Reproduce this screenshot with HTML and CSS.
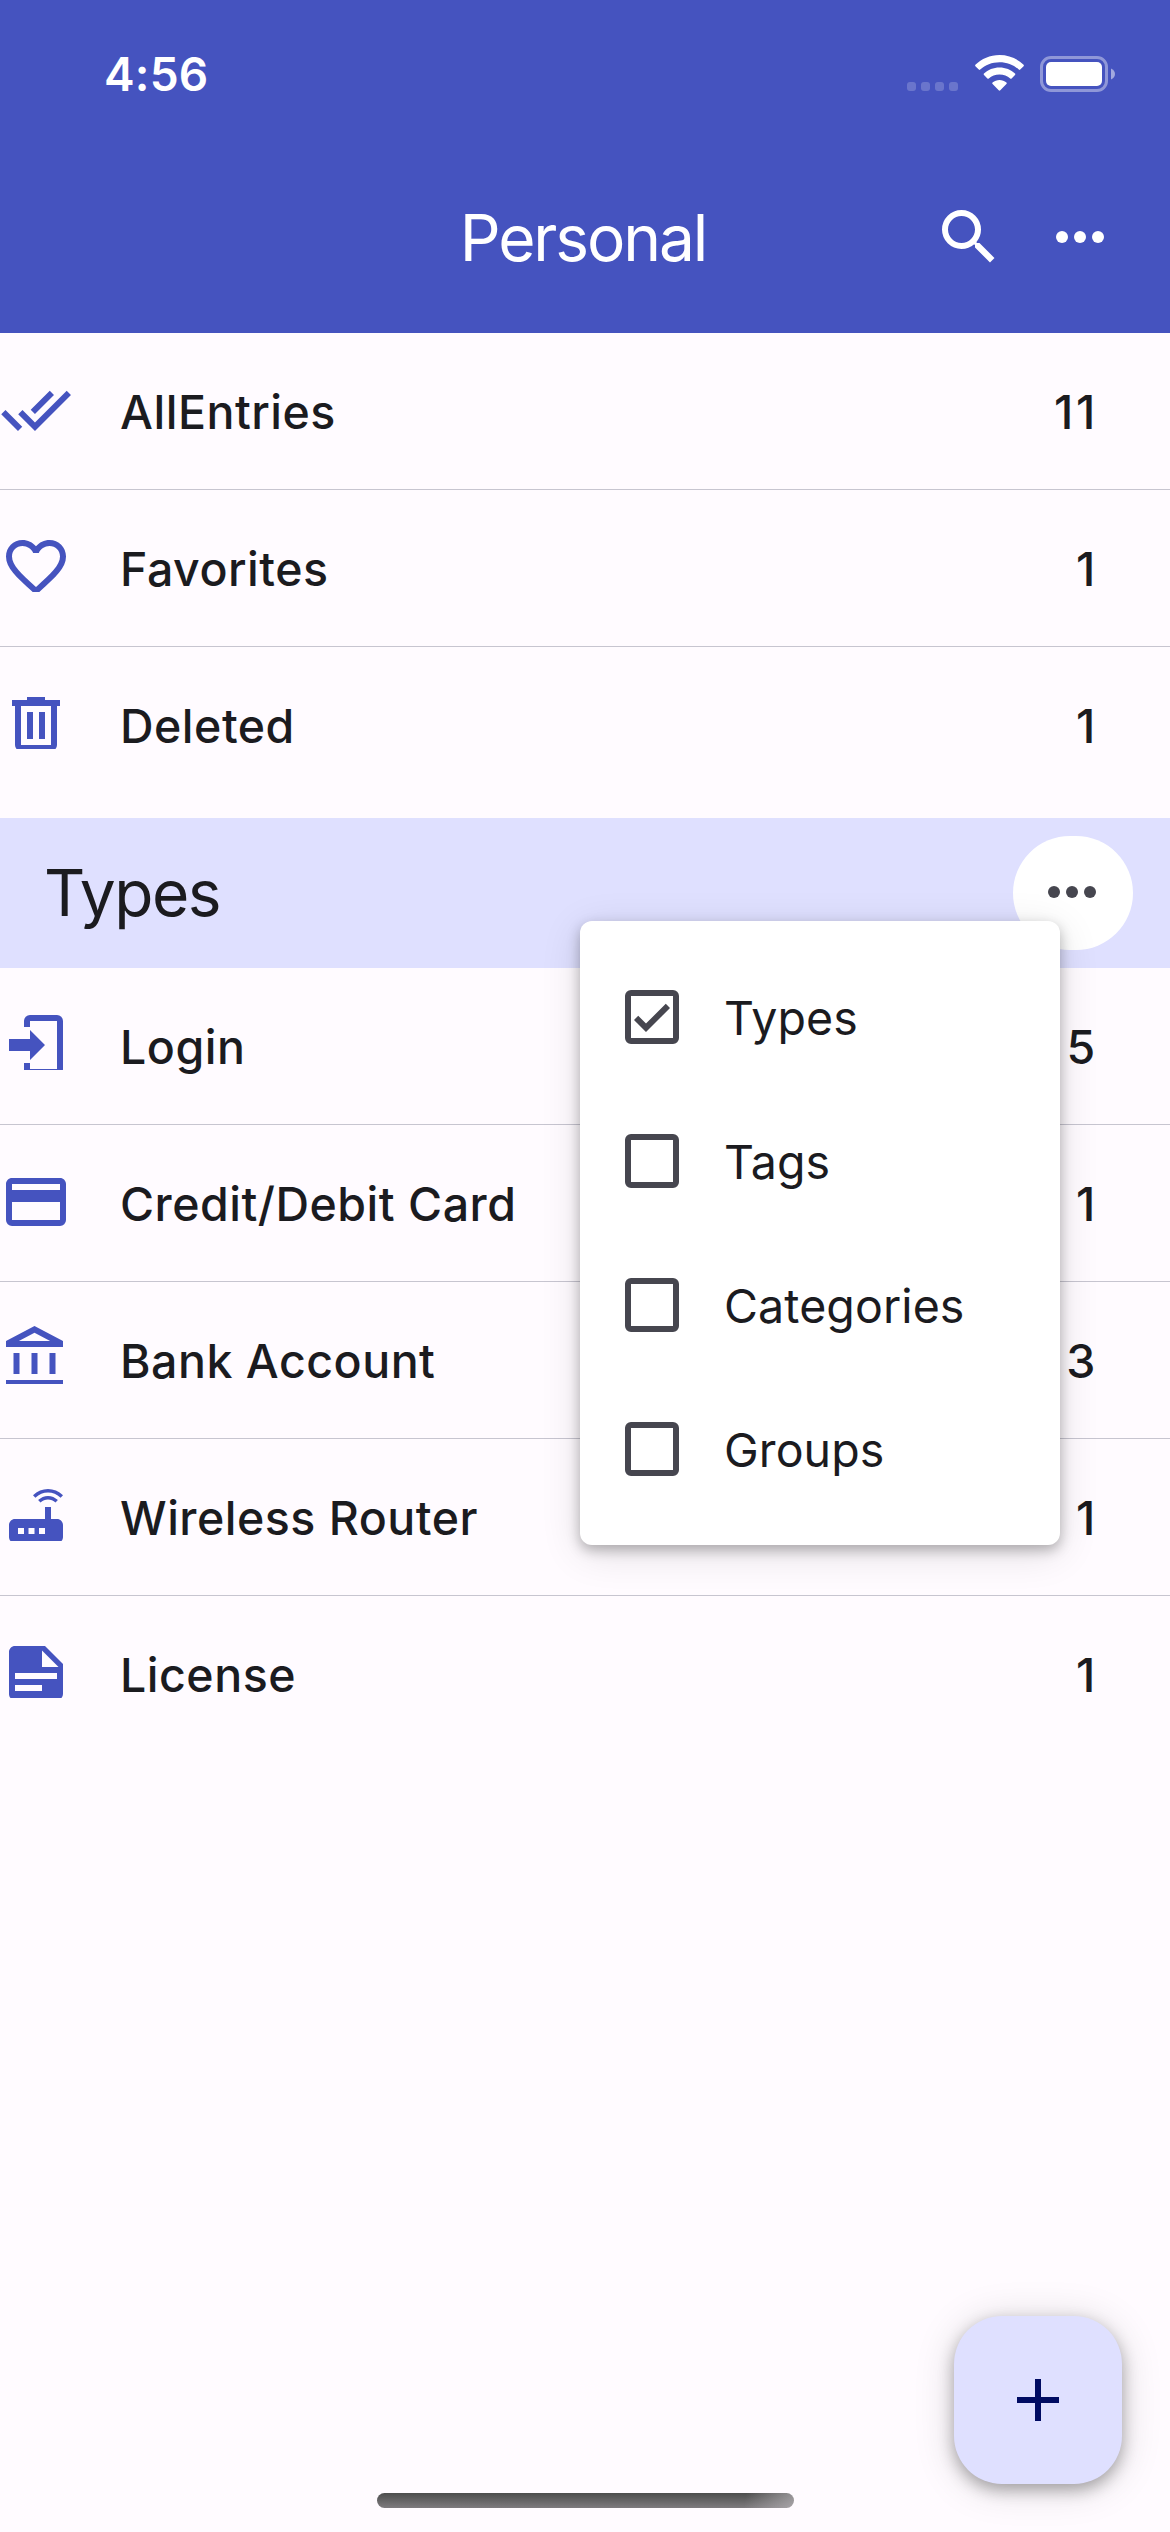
FILE: index.html
```
<!DOCTYPE html>
<html lang="en">
<head>
<meta charset="utf-8">
<title>Personal</title>
<link rel="stylesheet" href="styles.css">
</head>
<body>
<div class="screen">
  <header class="app-header">
    <div class="status-bar">
      <span class="time">4:56</span>
      <div class="status-icons">
        <svg class="signal" viewBox="0 0 51 9"><rect width="9" height="9" rx="3"/><rect x="14" width="9" height="9" rx="3"/><rect x="28" width="9" height="9" rx="3"/><rect x="42" width="9" height="9" rx="3"/></svg>
        <svg class="wifi" viewBox="0 0 49 36"><path d="M24.500 0C34 0 42.500 3.800 48.600 9.800Q49.200 10.500 48.600 11.200L45.200 14.600Q44.500 15.200 43.800 14.600C38.800 9.900 32 7.200 24.500 7.200S10.200 9.900 5.200 14.600Q4.500 15.200 3.800 14.600L.4 11.200Q-.2 10.500.4 9.800C6.500 3.800 15 0 24.500 0ZM24.500 12.500C30.500 12.500 36 14.800 40 18.600Q40.700 19.300 40 20L36.600 23.400Q35.900 24.100 35.200 23.400C32.400 20.900 28.700 19.400 24.500 19.400S16.600 20.900 13.800 23.400Q13.100 24.100 12.400 23.400L9 20Q8.300 19.300 9 18.600C13 14.800 18.500 12.500 24.500 12.500ZM24.500 24.900C27.100 24.900 29.500 25.800 31.400 27.400Q32.100 28.100 31.400 28.900L25.300 35.300Q24.500 36 23.700 35.300L17.600 28.900Q16.900 28.100 17.600 27.400C19.500 25.800 21.900 24.900 24.500 24.900Z"/></svg>
        <svg class="battery" viewBox="0 0 75 36"><rect x="1.500" y="1.500" width="65" height="33" rx="9.500" fill="none" stroke="currentColor" stroke-width="3" opacity=".4"/><rect x="6" y="6" width="56" height="24" rx="5"/><path d="M71 12.500C73.500 13.700 75 15.600 75 18S73.500 22.300 71 23.500Z" opacity=".5"/></svg>
      </div>
    </div>
    <div class="toolbar">
      <h1 class="title">Personal</h1>
      <div class="actions">
        <svg class="icon" viewBox="0 0 24 24"><path d="M15.500 14h-.79l-.28-.27A6.470 6.470 0 0 0 16 9.500 6.500 6.500 0 1 0 9.500 16c1.610 0 3.090-.59 4.230-1.570l.27.28v.79l5 4.990L20.490 19l-4.990-5zm-6 0C7.010 14 5 11.990 5 9.500S7.010 5 9.500 5 14 7.010 14 9.500 11.990 14 9.500 14z"/></svg>
        <svg class="icon" viewBox="0 0 24 24"><circle cx="6" cy="12" r="2"/><circle cx="12" cy="12" r="2"/><circle cx="18" cy="12" r="2"/></svg>
      </div>
    </div>
  </header>

  <ul class="list summary">
    <li class="row"><svg class="row-icon" viewBox="0 0 24 20.333"><path d="M.41 13.410 6 19l1.410-1.420L1.830 12M22.240 5.580 11.660 16.170 7.500 12l-1.430 1.410L11.660 19l12-12M18 7l-1.410-1.420-6.350 6.350 1.420 1.410L18 7Z"/></svg><span class="label">AllEntries</span><span class="count">11</span></li>
    <li class="row"><svg class="row-icon" viewBox="0 0 24 20.333"><path d="M12.100 18.550l-.1.100-.11-.1C7.140 14.240 4 11.390 4 8.500 4 6.500 5.500 5 7.500 5c1.540 0 3.040 1 3.570 2.360h1.860C13.460 6 14.960 5 16.500 5c2 0 3.500 1.500 3.500 3.500 0 2.890-3.140 5.740-7.900 10.050M16.500 3c-1.740 0-3.410.81-4.500 2.080C10.910 3.810 9.240 3 7.500 3 4.420 3 2 5.410 2 8.500c0 3.770 3.400 6.860 8.550 11.530L12 21.350l1.450-1.320C18.600 15.360 22 12.270 22 8.500 22 5.410 19.580 3 16.500 3Z"/></svg><span class="label">Favorites</span><span class="count">1</span></li>
    <li class="row"><svg class="row-icon" viewBox="0 0 24 20.333"><path d="M9 3v1H4v2h1v13a2 2 0 0 0 2 2h10a2 2 0 0 0 2-2V6h1V4h-5V3H9M7 6h10v13H7V6M9 8v9h2V8H9M13 8v9h2V8h-2Z"/></svg><span class="label">Deleted</span><span class="count">1</span></li>
  </ul>

  <div class="section-head">
    <h2 class="section-title">Types</h2>
    <div class="more"><svg class="icon" viewBox="0 0 24 24"><circle cx="6" cy="12" r="2"/><circle cx="12" cy="12" r="2"/><circle cx="18" cy="12" r="2"/></svg></div>
    <div class="menu">
      <div class="menu-item"><svg class="icon" viewBox="0 0 24 24"><path d="M19 3H5a2 2 0 0 0-2 2v14a2 2 0 0 0 2 2h14a2 2 0 0 0 2-2V5a2 2 0 0 0-2-2m0 2v14H5V5h14M10 17l-4-4 1.410-1.420L10 14.170l6.590-6.590L18 9"/></svg><span>Types</span></div>
      <div class="menu-item"><svg class="icon" viewBox="0 0 24 24"><path d="M19 3H5a2 2 0 0 0-2 2v14a2 2 0 0 0 2 2h14a2 2 0 0 0 2-2V5a2 2 0 0 0-2-2m0 2v14H5V5h14Z"/></svg><span>Tags</span></div>
      <div class="menu-item"><svg class="icon" viewBox="0 0 24 24"><path d="M19 3H5a2 2 0 0 0-2 2v14a2 2 0 0 0 2 2h14a2 2 0 0 0 2-2V5a2 2 0 0 0-2-2m0 2v14H5V5h14Z"/></svg><span>Categories</span></div>
      <div class="menu-item"><svg class="icon" viewBox="0 0 24 24"><path d="M19 3H5a2 2 0 0 0-2 2v14a2 2 0 0 0 2 2h14a2 2 0 0 0 2-2V5a2 2 0 0 0-2-2m0 2v14H5V5h14Z"/></svg><span>Groups</span></div>
    </div>
  </div>

  <ul class="list">
    <li class="row"><svg class="row-icon" viewBox="0 0 24 20.333"><path d="M10 17v-3H3v-4h7V7l5 5-5 5M10 2h9a2 2 0 0 1 2 2v16a2 2 0 0 1-2 2h-9a2 2 0 0 1-2-2v-2h2v2h9V4h-9v2H8V4a2 2 0 0 1 2-2Z"/></svg><span class="label">Login</span><span class="count">5</span></li>
    <li class="row"><svg class="row-icon" viewBox="0 0 24 20.333"><path d="M20 8H4V6h16m0 12H4v-6h16m0-8H4c-1.110 0-2 .89-2 2v12a2 2 0 0 0 2 2h16a2 2 0 0 0 2-2V6c0-1.110-.89-2-2-2Z"/></svg><span class="label">Credit/Debit Card</span><span class="count">1</span></li>
    <li class="row"><svg class="row-icon" viewBox="0 0 24 20.333"><path d="M6.500 10h-2v7h2v-7zM12.500 10h-2v7h2v-7zM21 19H2v2h19v-2zM18.500 10h-2v7h2v-7zM11.500 3.260 16.710 6H6.290l5.210-2.740M11.500 1 2 6v2h19V6l-9.500-5z"/></svg><span class="label">Bank Account</span><span class="count">3</span></li>
    <li class="row"><svg class="row-icon" viewBox="0 0 24 20.333"><path d="M20.200 5.900l.8-.8C19.600 3.700 17.800 3 16 3s-3.600.7-5 2.100l.8.800C13 4.800 14.500 4.200 16 4.200s3 .6 4.200 1.700zm-.9.800c-.9-.9-2.100-1.400-3.300-1.400s-2.400.5-3.300 1.400l.8.800c.7-.7 1.600-1 2.500-1s1.800.3 2.500 1l.8-.8zM19 13h-2V9h-2v4H5c-1.100 0-2 .9-2 2v4c0 1.100.9 2 2 2h14c1.100 0 2-.9 2-2v-4c0-1.100-.9-2-2-2zM8 18H6v-2h2v2zm3.500 0h-2v-2h2v2zm3.500 0h-2v-2h2v2z"/></svg><span class="label">Wireless Router</span><span class="count">1</span></li>
    <li class="row"><svg class="row-icon" viewBox="0 0 24 20.333"><path d="M14 10h5.500L14 4.500V10M5 3h10l6 6v10a2 2 0 0 1-2 2H5c-1.110 0-2-.9-2-2V5c0-1.110.89-2 2-2M5 12v2h14v-2H5M5 16v2h9v-2H5Z"/></svg><span class="label">License</span><span class="count">1</span></li>
  </ul>

  <div class="fab"><svg class="icon" viewBox="0 0 24 24"><path d="M19 13h-6v6h-2v-6H5v-2h6V5h2v6h6v2Z"/></svg></div>
  <div class="home-indicator"></div>
</div>
</body>
</html>
```
FILE: styles.css
```
* { box-sizing: border-box; margin: 0; padding: 0; }

body {
  font-family: Inter, "Liberation Sans", sans-serif;
  background: #fffbff;
  color: #1b1b1f;
}

svg { display: block; fill: currentColor; flex: none; }

.screen {
  position: relative;
  width: 1170px;
  height: 2532px;
  overflow: hidden;
}

.icon { width: 72px; height: 72px; }

.app-header { height: 333px; background: #4553bf; color: #fff; }

.status-bar {
  display: flex;
  justify-content: space-between;
  height: 141px;
  padding: 55px 55px 0 104px;
}
.time { font-size: 46px; font-weight: 600; line-height: 39px; letter-spacing: .2px; }
.status-icons { display: flex; align-items: flex-start; }
.signal { width: 51px; height: 9px; margin: 27px 17px 0 0; opacity: .2; }
.wifi { width: 49px; height: 36px; margin-right: 16px; }
.battery { width: 75px; height: 36px; margin-top: 1px; }

.toolbar {
  display: grid;
  grid-template-columns: 1fr auto 1fr;
  align-items: center;
  height: 192px;
  padding: 0 54px;
}
.title {
  grid-column: 2;
  padding: 2px 4px 0 0;
  font-size: 64px;
  font-weight: 400;
  line-height: 84px;
  letter-spacing: -2.1px;
}
.actions { display: flex; justify-content: flex-end; gap: 39px; }

.list { list-style: none; }
.row {
  display: flex;
  align-items: flex-start;
  height: 157px;
  padding: 41px 75px 0 0;
  border-bottom: 1px solid #c7c5d0;
  font-size: 46.5px;
  font-weight: 500;
  line-height: 72px;
}
.row:last-child { border-bottom: 0; }
.row-icon { width: 72px; height: 61px; color: #4553bf; }
.label { flex: 1; margin-left: 48px; padding-top: 2px; letter-spacing: .5px; }
.count { margin-right: -3px; padding-top: 2px; letter-spacing: 2.7px; }
.summary { height: 485px; }

.section-head {
  position: relative;
  display: flex;
  align-items: center;
  justify-content: space-between;
  height: 150px;
  padding: 0 37px 0 44px;
  background: #dfe0ff;
}
.section-title { font-size: 64px; font-weight: 400; line-height: 84px; letter-spacing: -1.5px; }
.more {
  display: flex;
  align-items: center;
  justify-content: center;
  width: 120px;
  height: 114px;
  padding: 0 2px 2px 0;
  border-radius: 57px;
  background: #fff;
  color: #46464f;
}

.menu {
  position: absolute;
  z-index: 2;
  top: 103px;
  left: 580px;
  width: 480px;
  padding: 24px 36px;
  border-radius: 12px;
  background: #fff;
  box-shadow: 0 5px 13px rgba(0, 0, 0, .28), 0 8px 40px rgba(0, 0, 0, .12);
}
.menu-item {
  display: flex;
  align-items: center;
  gap: 36px;
  height: 144px;
  font-size: 46.5px;
  letter-spacing: .1px;
}
.menu-item svg { color: #46464f; }
.menu-item span { padding-top: 2px; }

.fab {
  position: absolute;
  right: 48px;
  bottom: 48px;
  display: flex;
  align-items: center;
  justify-content: center;
  width: 168px;
  height: 168px;
  border-radius: 48px;
  background: #dfe0ff;
  color: #000b62;
  box-shadow: 0 6px 16px rgba(0, 0, 0, .3), 0 4px 40px rgba(0, 0, 0, .15);
}

.home-indicator {
  position: absolute;
  left: 377px;
  bottom: 24px;
  width: 417px;
  height: 15px;
  border-radius: 8px;
  background:
    linear-gradient(100deg, transparent 88%, rgba(190, 186, 190, .65)),
    linear-gradient(#4d4d4d, #7e7b7e);
}
```
